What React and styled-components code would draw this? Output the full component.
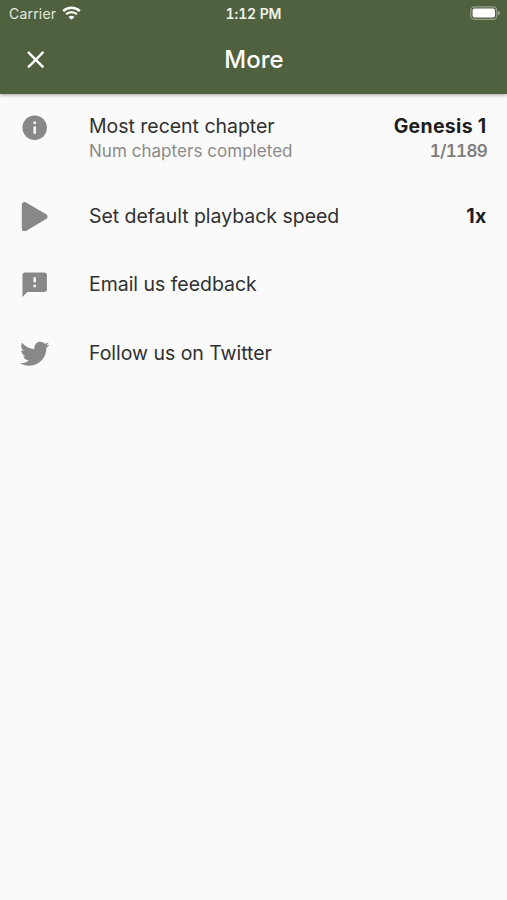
import React from "react";
import styled, { createGlobalStyle } from "styled-components";
import { FaPlay, FaTwitter } from "react-icons/fa";
import { MdClose, MdFeedback, MdInfo } from "react-icons/md";

const rows = [
  {
    icon: <MdInfo />,
    title: "Most recent chapter",
    subtitle: "Num chapters completed",
    value: "Genesis 1",
    subvalue: "1/1189",
  },
  { icon: <FaPlay />, title: "Set default playback speed", value: "1x" },
  { icon: <MdFeedback />, title: "Email us feedback" },
  { icon: <FaTwitter />, title: "Follow us on Twitter" },
];

const WifiIcon = () => (
  <svg width="19" height="14" viewBox="0 0 19 14" fill="none">
    <path d="M1.2 5.1a11.9 11.9 0 0 1 16.6 0" stroke="#fff" strokeWidth="2.5" />
    <path d="M4.1 8.3a7.6 7.6 0 0 1 10.8 0" stroke="#fff" strokeWidth="2.3" />
    <path d="M6.5 10.9a4.2 4.2 0 0 1 6 0L9.5 13.8z" fill="#fff" />
  </svg>
);

const BatteryIcon = () => (
  <svg width="31" height="15" viewBox="0 0 31 15">
    <rect x="0.8" y="0.8" width="26" height="12.6" rx="3.6" fill="none" stroke="#fff" strokeOpacity="0.4" strokeWidth="1.2" />
    <rect x="2.6" y="2.6" width="22.4" height="9" rx="2" fill="#fff" />
    <path d="M28.2 5c1.2.4 1.8 1.2 1.8 2.1s-.6 1.7-1.8 2.1z" fill="#fff" fillOpacity="0.45" />
  </svg>
);

const App = () => {
  return (
    <Page>
      <GlobalStyle />
      <Header>
        <StatusBar>
          <Carrier>
            <span>Carrier</span>
            <WifiIcon />
          </Carrier>
          <Clock>1:12 PM</Clock>
          <Battery>
            <BatteryIcon />
          </Battery>
        </StatusBar>
        <Toolbar>
          <CloseButton aria-label="Close">
            <MdClose />
          </CloseButton>
          <Heading>More</Heading>
        </Toolbar>
      </Header>
      <List>
        {rows.map((row) => (
          <Row key={row.title} $tall={!!row.subtitle}>
            <RowIcon>{row.icon}</RowIcon>
            <Content $tall={!!row.subtitle}>
              <Line>
                <Title>{row.title}</Title>
                {row.value && <Value>{row.value}</Value>}
              </Line>
              {row.subtitle && (
                <Line $small>
                  <Subtitle>{row.subtitle}</Subtitle>
                  <Subvalue>{row.subvalue}</Subvalue>
                </Line>
              )}
            </Content>
          </Row>
        ))}
      </List>
    </Page>
  );
};

export default App;

const GlobalStyle = createGlobalStyle`
  body {
    margin: 0;
    background-color: #fafafa;
    font-family: Inter, "Liberation Sans", sans-serif;
  }
`
const Page = styled.div`
  min-height: 100vh;
  background-color: #fafafa;
`
const Header = styled.header`
  height: 94px;
  background-color: #4f613e;
  color: white;
  box-shadow: 0 1px 4px rgba(0,0,0,0.36);
`
const StatusBar = styled.div`
  display: grid;
  grid-template-columns: 1fr auto 1fr;
  align-items: center;
  height: 25px;
  padding: 2px 6px 0 9px;
  box-sizing: border-box;
`
const Carrier = styled.div`
  display: flex;
  align-items: center;
  gap: 5.5px;
  font-size: 14px;
  letter-spacing: 0.2px;
  color: #e4e9df;
  svg{
    margin-top: -2px;
  }
`
const Clock = styled.div`
  margin-left: -3px;
  font-size: 14px;
  font-weight: 600;
  letter-spacing: -0.12px;
  font-variant-numeric: tabular-nums;
  color: #eef2ea;
`
const Battery = styled.div`
  display: flex;
  justify-content: flex-end;
`
const Toolbar = styled.div`
  display: grid;
  grid-template-columns: 70px 1fr 70px;
  align-items: center;
  height: 69px;
`
const CloseButton = styled.button`
  display: flex;
  justify-content: center;
  padding: 0 0 0 1px;
  border: none;
  background: none;
  color: white;
  font-size: 29.4px;
`
const Heading = styled.h1`
  margin: 0;
  padding-left: 1px;
  font-size: 24px;
  font-weight: 500;
  text-align: center;
`
const List = styled.ul`
  margin: 0;
  padding: 0;
  list-style: none;
`
const Row = styled.li`
  display: flex;
  align-items: ${(props) => (props.$tall ? "flex-start" : "center")};
  height: ${(props) => (props.$tall ? "88px" : "68.6px")};
  padding: ${(props) => (props.$tall ? "19px" : "0")} 20px 0;
  box-sizing: border-box;
`
const RowIcon = styled.div`
  display: flex;
  width: 69px;
  font-size: 29.4px;
  color: #888888;
`
const Content = styled.div`
  flex: 1;
  padding-top: ${(props) => (props.$tall ? "1px" : "0")};
`
const Line = styled.div`
  display: flex;
  justify-content: space-between;
  line-height: 25px;
  font-size: ${(props) => (props.$small ? "17px" : "19.5px")};
`
const Title = styled.span`
  letter-spacing: -0.03px;
  color: #303030;
`
const Value = styled.span`
  margin-right: 0.5px;
  font-weight: 700;
  letter-spacing: 0.3px;
  color: #1e1e1e;
`
const Subtitle = styled.span`
  letter-spacing: 0.04px;
  color: #8a8a8a;
`
const Subvalue = styled.span`
  font-weight: 600;
  letter-spacing: -0.7px;
  font-variant-numeric: tabular-nums;
  color: #7d7d7d;
`
